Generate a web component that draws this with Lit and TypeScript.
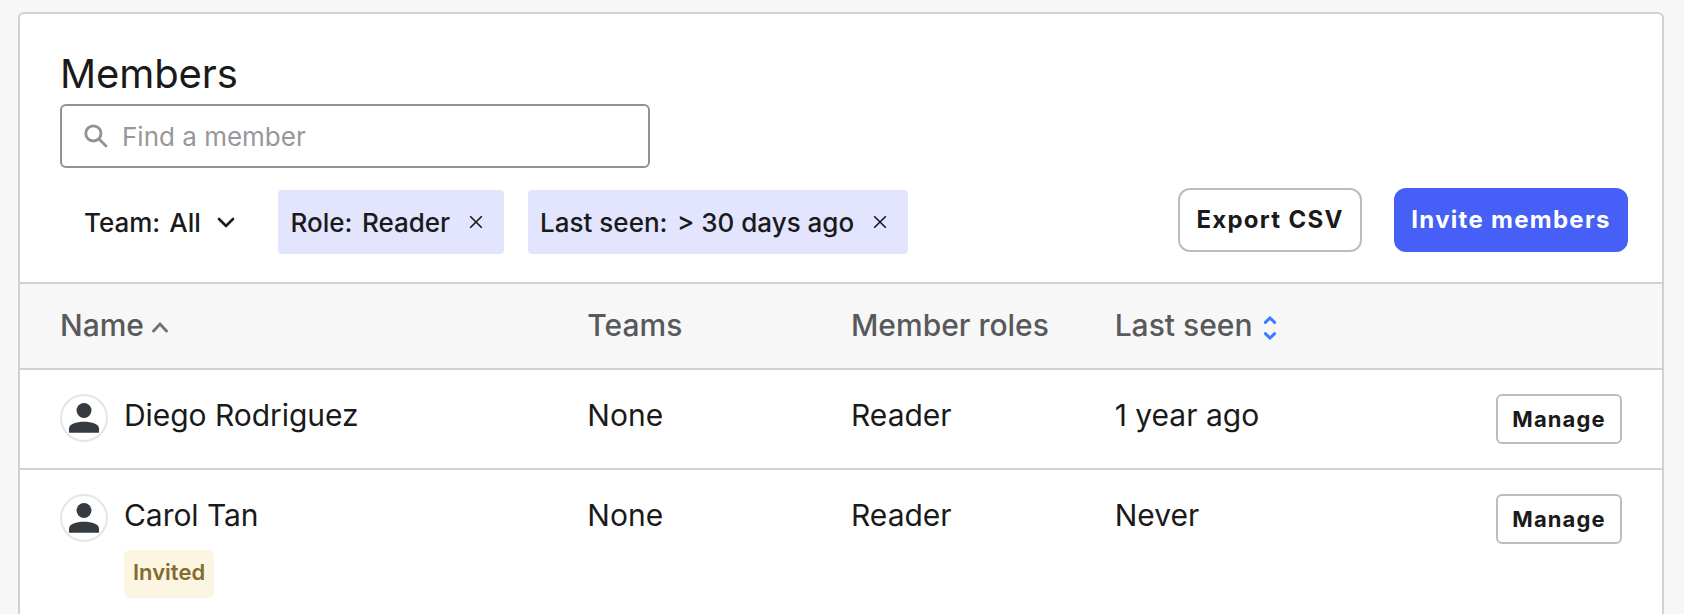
import { LitElement, html, css, svg } from "lit";
import { customElement, property } from "lit/decorators.js";

interface Member {
  name: string;
  teams: string;
  role: string;
  lastSeen: string;
  invited?: boolean;
}

const MEMBERS: Member[] = [
  { name: "Diego Rodriguez", teams: "None", role: "Reader", lastSeen: "1 year ago" },
  { name: "Carol Tan", teams: "None", role: "Reader", lastSeen: "Never", invited: true },
];

const closeIcon = svg`<path d="M1.2 1.2 12.8 12.8M12.8 1.2 1.2 12.8" fill="none" stroke="currentColor" stroke-width="1.6"/>`;

@customElement("filter-chip")
export class FilterChip extends LitElement {
  @property() label = "";
  @property() value = "";

  static styles = css`
    :host {
      display: flex;
      align-items: center;
      box-sizing: border-box;
      height: 64px;
      padding: 0 21px 0 12.5px;
      background: #e3e4fd;
      border-radius: 4px;
      color: #1a1a1a;
      white-space: nowrap;
    }
    .text { line-height: 32px; padding-top: 2px; }
    .label { margin-right: 9.5px; }
    .close { display: block; width: 14px; height: 14px; margin-left: 18.5px; }
  `;

  render() {
    return html`
      <span class="text label">${this.label}:</span><span class="text">${this.value}</span>
      <svg class="close" viewBox="0 0 14 14">${closeIcon}</svg>
    `;
  }
}

@customElement("member-row")
export class MemberRow extends LitElement {
  @property({ attribute: false }) member!: Member;

  static styles = css`
    :host {
      display: grid;
      grid-template-columns: 2fr 1fr 1fr 1fr 1fr;
      align-items: start;
      box-sizing: border-box;
      min-height: 100px;
      padding: 24px 20px 24px 40px;
      border-bottom: 2px solid #d1d1d1;
      font-size: 30px;
      line-height: 42px;
      color: #1a1a1a;
    }
    .who { display: flex; gap: 16px; }
    .avatar {
      display: block;
      box-sizing: border-box;
      width: 48px;
      height: 48px;
      border: 2px solid #e5e5e5;
      border-radius: 50%;
    }
    .info { display: flex; flex-direction: column; align-items: flex-start; }
    .name { letter-spacing: -0.05px; }
    .badge {
      box-sizing: border-box;
      height: 48px;
      margin-top: 14px;
      padding: 0 9px;
      border-radius: 6px;
      background: #fbf5e2;
      color: #846b2f;
      font-size: 22px;
      font-weight: 600;
      line-height: 44px;
    }
    .action { display: flex; justify-content: flex-end; padding-right: 20px; }
    .manage {
      box-sizing: border-box;
      width: 126px;
      height: 50px;
      padding: 0;
      border: 2px solid #bdbdbd;
      border-radius: 6px;
      background: #fff;
      color: #1a1a1a;
      font: 700 22px/46px Inter, sans-serif;
      letter-spacing: 1.1px;
    }
  `;

  render() {
    const m = this.member;
    return html`
      <div class="who">
        <svg class="avatar" viewBox="0 0 44 44">
          <circle cx="22" cy="14.5" r="7.5" fill="#353b41" />
          <path d="M7 36.7V32.5C7 28 14 25.7 22 25.7S37 28 37 32.5V36.7Z" fill="#353b41" />
        </svg>
        <div class="info">
          <span class="name">${m.name}</span>
          ${m.invited ? html`<span class="badge">Invited</span>` : ""}
        </div>
      </div>
      <span>${m.teams}</span>
      <span>${m.role}</span>
      <span>${m.lastSeen}</span>
      <div class="action"><button class="manage">Manage</button></div>
    `;
  }
}

@customElement("app-root")
export class AppRoot extends LitElement {
  static styles = css`
    :host {
      display: block;
      box-sizing: border-box;
      height: 614px;
      overflow: hidden;
      padding: 12px 20px 0 18px;
      background: #f7f7f7;
      font-family: Inter, sans-serif;
      color: #1a1a1a;
    }
    .card {
      box-sizing: border-box;
      height: 640px;
      border: 2px solid #d1d1d1;
      border-radius: 6px;
      background: #fff;
      overflow: hidden;
    }
    .top { box-sizing: border-box; height: 268px; padding: 36px 34px 0 40px; }
    .title { margin: 0; height: 54px; font-size: 40px; font-weight: 400; line-height: 48px; letter-spacing: -0.1px; }
    .search {
      display: flex;
      align-items: center;
      box-sizing: border-box;
      width: 590px;
      height: 64px;
      padding-left: 22px;
      border: 2px solid #919196;
      border-radius: 6px;
      color: #97979b;
      font-size: 26px;
      line-height: 32px;
    }
    .search span { padding-top: 2px; }
    .search-icon { display: block; width: 24px; height: 24px; margin-right: 14px; }
    .toolbar { display: flex; align-items: flex-start; justify-content: space-between; padding-top: 20px; }
    .filters {
      display: flex;
      gap: 24px;
      padding-top: 2px;
      font-size: 26px;
      font-weight: 450;
    }
    .team {
      display: flex;
      align-items: center;
      box-sizing: border-box;
      width: 194px;
      height: 64px;
      padding-left: 24px;
      line-height: 32px;
    }
    .team-text { padding-top: 2px; }
    .team-label { margin-right: 9px; }
    .chevron { display: block; width: 18px; height: 12px; margin: 2px 0 0 16px; }
    .actions { display: flex; gap: 32px; }
    .btn {
      box-sizing: border-box;
      height: 64px;
      padding: 0;
      border: 2px solid #bdbdbd;
      border-radius: 12px;
      background: #fff;
      color: #1a1a1a;
      font: 700 24px/58px Inter, sans-serif;
      letter-spacing: 1.28px;
      white-space: nowrap;
    }
    .export { width: 184px; }
    .invite { width: 234px; border-color: #455ff7; background: #455ff7; color: #fff; }
    .thead {
      display: grid;
      grid-template-columns: 2fr 1fr 1fr 1fr 1fr;
      box-sizing: border-box;
      height: 88px;
      padding: 20px 20px 0 40px;
      border-top: 2px solid #d1d1d1;
      border-bottom: 2px solid #d1d1d1;
      background: #f7f7f7;
      color: #58595b;
      font-size: 30px;
      font-weight: 450;
      line-height: 42px;
    }
    .cell { display: flex; align-items: center; white-space: nowrap; }
    .thead .cell { height: 42px; }
    .sort-up { display: block; width: 16px; height: 12px; margin: 4px 0 0 8px; }
    .sort-both { display: block; width: 14px; height: 26px; margin: 6px 0 0 11px; }
  `;

  render() {
    return html`
      <section class="card">
        <header class="top">
          <h1 class="title">Members</h1>
          <div class="search">
            <svg class="search-icon" viewBox="0 0 24 24" fill="none" stroke="#919196" stroke-width="2.8">
              <circle cx="9.4" cy="9.4" r="7.6" />
              <path d="M15.2 15.2 22.8 22.8" />
            </svg>
            <span>Find a member</span>
          </div>
          <div class="toolbar">
            <div class="filters">
              <div class="team">
                <span class="team-text team-label">Team:</span><span class="team-text">All</span>
                <svg class="chevron" viewBox="0 0 18 12">
                  <path d="M2 2 9 9 16 2" fill="none" stroke="#1a1a1a" stroke-width="2.6" stroke-linecap="round" />
                </svg>
              </div>
              <filter-chip label="Role" value="Reader"></filter-chip>
              <filter-chip label="Last seen" value="> 30 days ago"></filter-chip>
            </div>
            <div class="actions">
              <button class="btn export">Export CSV</button>
              <button class="btn invite">Invite members</button>
            </div>
          </div>
        </header>
        <div class="thead">
          <div class="cell">
            Name
            <svg class="sort-up" viewBox="0 0 16 12">
              <path d="M1.5 10 8 3 14.5 10" fill="none" stroke="#68717c" stroke-width="2.8" stroke-linecap="round" />
            </svg>
          </div>
          <div class="cell">Teams</div>
          <div class="cell">Member roles</div>
          <div class="cell">
            Last seen
            <svg class="sort-both" viewBox="0 0 14 26" fill="none" stroke="#3b7bff" stroke-width="3" stroke-linecap="round">
              <path d="M2.4 7.4 7 3 11.6 7.4M2.4 18.6 7 23 11.6 18.6" />
            </svg>
          </div>
        </div>
        ${MEMBERS.map((m) => html`<member-row .member=${m}></member-row>`)}
      </section>
    `;
  }
}
